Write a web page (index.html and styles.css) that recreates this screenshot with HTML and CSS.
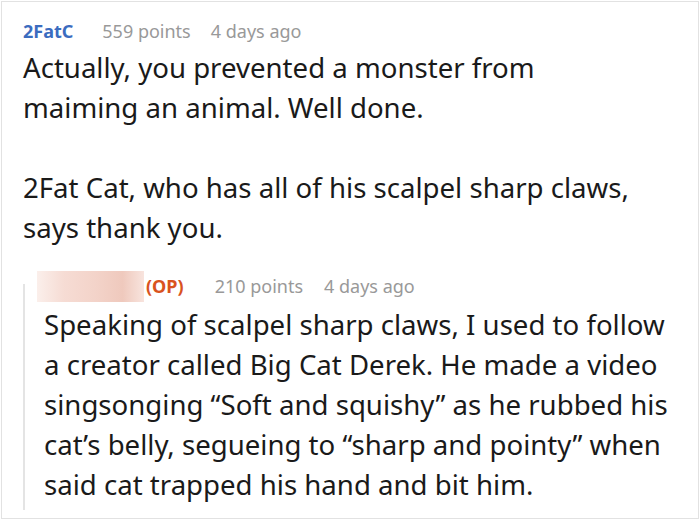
FILE: index.html
```html
<!DOCTYPE html>
<html lang="en">
<head>
<meta charset="utf-8">
<title>Comment thread</title>
<link rel="stylesheet" href="styles.css">
</head>
<body>
<div class="frame">
  <div class="comment">
    <div class="meta">
      <span class="user">2FatC</span>
      <span class="info">559 points</span>
      <span class="info">4 days ago</span>
    </div>
    <div class="body main-body">
      <p>Actually, you prevented a monster from maiming an animal. Well done.</p>
      <p>2Fat Cat, who has all of his scalpel sharp claws, says thank you.</p>
    </div>
    <div class="reply">
      <div class="meta">
        <span class="blur"></span><span class="op">(OP)</span>
        <span class="info points">210 points</span>
        <span class="info">4 days ago</span>
      </div>
      <div class="body reply-body">
        <p>Speaking of scalpel sharp claws, I used to follow a creator called Big Cat Derek. He made a video singsonging “Soft and squishy” as he rubbed his cat’s belly, segueing to “sharp and pointy” when said cat trapped his hand and bit him.</p>
      </div>
    </div>
  </div>
</div>
</body>
</html>
```

FILE: styles.css
```css
html, body {
  margin: 0;
  padding: 0;
  background: #ffffff;
}

body {
  font-family: "Noto Sans", "Open Sans", sans-serif;
  color: #1a1a1a;
}

.frame {
  box-sizing: border-box;
  width: 698px;
  height: 518px;
  margin: 1px 0 0 1px;
  border: 1px solid #e2e2e2;
  overflow: hidden;
}

.comment {
  padding: 17px 0 0 21px;
}

.meta {
  display: flex;
  align-items: center;
  gap: 20px;
  font-size: 18px;
  line-height: 24px;
  height: 24px;
}

.user {
  color: #3b6cbf;
  font-weight: 700;
  margin-right: 9px;
}

.info {
  color: #999999;
}

.body {
  font-size: 27.6px;
  line-height: 40px;
}

.main-body {
  margin-top: 4px;
  width: 622px;
}

.body p {
  margin: 0 0 40px 0;
}

.body p:last-child {
  margin-bottom: 0;
}

.reply {
  position: relative;
  margin-top: 27px;
  padding-left: 14px;
}

.reply::before {
  content: "";
  position: absolute;
  left: 0;
  top: 10px;
  bottom: -6px;
  width: 2px;
  background: #e4e4e4;
}

.reply .meta {
  gap: 0;
}

.reply .meta .info {
  margin-left: 21px;
}

.reply .meta .points {
  margin-left: 31px;
}

.blur {
  display: inline-block;
  width: 107px;
  height: 31px;
  background: linear-gradient(90deg, #fbefeb 0%, #f6dcd4 25%, #f3d3c9 55%, #efc9bd 80%, #f8e4de 100%);
}

.op {
  color: #d9531e;
  font-weight: 700;
  margin-left: 2px;
}

.reply-body {
  margin-top: 6px;
  padding-left: 7px;
  width: 630px;
}
```
